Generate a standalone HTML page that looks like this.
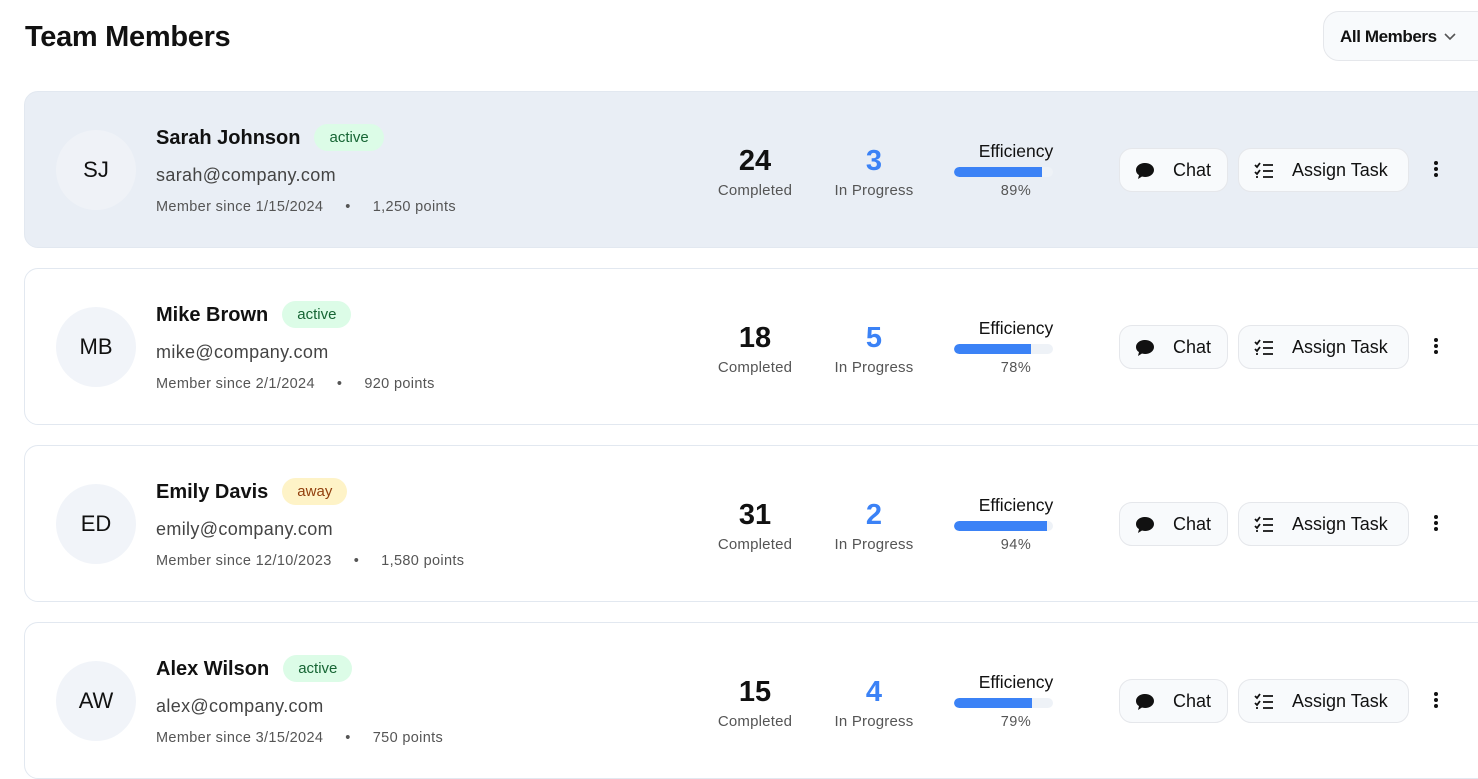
<!DOCTYPE html>
<html><head><style>
*{box-sizing:border-box;margin:0;padding:0}
body{width:1478px;height:775px;overflow:hidden;background:#fff;font-family:"Liberation Sans",sans-serif;color:#111;position:relative}
h1{position:absolute;left:25px;top:21px;font-size:29px;font-weight:700;letter-spacing:-0.3px}
.dd{position:absolute;left:1323px;top:11px;width:170px;height:50px;border:1px solid #e5e7eb;border-radius:16px;background:#f8fafc;font-size:17px;font-weight:700;padding:15px 0 0 16px;letter-spacing:-0.4px}
.dd svg{position:absolute;left:119px;top:20px}
.card{position:absolute;left:24px;width:1470px;height:157px;border:1px solid #e2e8f0;border-radius:14px;background:#fff}
.card.h{background:#e9eef5}
.av{position:absolute;left:31px;top:38px;width:80px;height:80px;border-radius:50%;background:#f1f4f9;font-size:22px;text-align:center;line-height:80px;color:#111}
.card.h .av{background:#eff2f7}
.nm{position:absolute;left:131px;top:32px;font-size:20px;font-weight:700;white-space:nowrap}
.bd{display:inline-block;margin-left:14px;height:27px;padding:0 15px;border-radius:14px;font-size:15px;font-weight:400;line-height:27px;vertical-align:2px}
.ac{background:#dcfce7;color:#166534}
.aw{background:#fef3c7;color:#92400e}
.em{position:absolute;left:131px;top:73px;font-size:18px;letter-spacing:0.35px;color:#444}
.mt{position:absolute;left:131px;top:107px;font-size:14.5px;letter-spacing:0.35px;color:#555;white-space:nowrap}
.mt span{margin:0 22px}
.st{position:absolute;width:120px;text-align:center}
.st b{display:block;font-size:29px;line-height:32px}
.st i{display:block;font-style:normal;font-size:15px;color:#555;margin-top:5px;letter-spacing:0.2px}
.ef{position:absolute;left:929px;top:49px;width:124px;text-align:center;font-size:17.5px}
.bar{position:absolute;left:929px;top:75px;width:99px;height:10px;border-radius:5px;background:#eef2f7;overflow:hidden}
.bar div{height:100%;background:#3b82f6;border-radius:5px 0 0 5px}
.pc{position:absolute;left:929px;top:91px;width:124px;text-align:center;font-size:14.5px;color:#555;letter-spacing:0.5px}
.btn{position:absolute;top:56px;height:44px;border:1px solid #e5e7eb;border-radius:13px;background:#f8fafc;font-size:18px;line-height:42px;padding-left:53px}
.btn svg{position:absolute;left:15px;top:13px}
.dots{position:absolute;left:1408px;top:68px}
</style></head><body>
<h1>Team Members</h1>
<div class="dd">All Members<svg width="14" height="10" viewBox="0 0 14 10"><path d="M2 2l5 5 5-5" fill="none" stroke="#555" stroke-width="1.6"/></svg></div>

<div class="card h" style="top:91px">
<div class="av">SJ</div>
<div class="nm">Sarah Johnson<span class="bd ac">active</span></div>
<div class="em">sarah@company.com</div>
<div class="mt">Member since 1/15/2024<span>•</span>1,250 points</div>
<div class="st" style="left:670px;top:53px"><b>24</b><i>Completed</i></div>
<div class="st" style="left:789px;top:53px"><b style="color:#3b82f6">3</b><i>In Progress</i></div>
<div class="ef">Efficiency</div><div class="bar"><div style="width:89%"></div></div><div class="pc">89%</div>
<div class="btn" style="left:1094px;width:109px">Chat<svg width="20" height="18" viewBox="0 0 20 18"><path d="M10 1C5 1 1 4 1 8c0 2 1 4 3 5l-1 4 4-2.5c1 .3 2 .5 3 .5 5 0 9-3 9-7s-4-7-9-7z" fill="#111"/></svg></div>
<div class="btn" style="left:1213px;width:171px">Assign Task<svg width="20" height="18" viewBox="0 0 20 18"><path d="M1 3l2 2 3-4M1 10l2 2 3-4M9 3h10M9 9h10M9 15h10M2 15h2" fill="none" stroke="#111" stroke-width="1.8"/></svg></div>
<svg class="dots" width="6" height="18"><circle cx="3" cy="3" r="2" fill="#111"/><circle cx="3" cy="9" r="2" fill="#111"/><circle cx="3" cy="15" r="2" fill="#111"/></svg>
</div>

<div class="card" style="top:268px">
<div class="av">MB</div>
<div class="nm">Mike Brown<span class="bd ac">active</span></div>
<div class="em">mike@company.com</div>
<div class="mt">Member since 2/1/2024<span>•</span>920 points</div>
<div class="st" style="left:670px;top:53px"><b>18</b><i>Completed</i></div>
<div class="st" style="left:789px;top:53px"><b style="color:#3b82f6">5</b><i>In Progress</i></div>
<div class="ef">Efficiency</div><div class="bar"><div style="width:78%"></div></div><div class="pc">78%</div>
<div class="btn" style="left:1094px;width:109px">Chat<svg width="20" height="18" viewBox="0 0 20 18"><path d="M10 1C5 1 1 4 1 8c0 2 1 4 3 5l-1 4 4-2.5c1 .3 2 .5 3 .5 5 0 9-3 9-7s-4-7-9-7z" fill="#111"/></svg></div>
<div class="btn" style="left:1213px;width:171px">Assign Task<svg width="20" height="18" viewBox="0 0 20 18"><path d="M1 3l2 2 3-4M1 10l2 2 3-4M9 3h10M9 9h10M9 15h10M2 15h2" fill="none" stroke="#111" stroke-width="1.8"/></svg></div>
<svg class="dots" width="6" height="18"><circle cx="3" cy="3" r="2" fill="#111"/><circle cx="3" cy="9" r="2" fill="#111"/><circle cx="3" cy="15" r="2" fill="#111"/></svg>
</div>

<div class="card" style="top:445px">
<div class="av">ED</div>
<div class="nm">Emily Davis<span class="bd aw">away</span></div>
<div class="em">emily@company.com</div>
<div class="mt">Member since 12/10/2023<span>•</span>1,580 points</div>
<div class="st" style="left:670px;top:53px"><b>31</b><i>Completed</i></div>
<div class="st" style="left:789px;top:53px"><b style="color:#3b82f6">2</b><i>In Progress</i></div>
<div class="ef">Efficiency</div><div class="bar"><div style="width:94%"></div></div><div class="pc">94%</div>
<div class="btn" style="left:1094px;width:109px">Chat<svg width="20" height="18" viewBox="0 0 20 18"><path d="M10 1C5 1 1 4 1 8c0 2 1 4 3 5l-1 4 4-2.5c1 .3 2 .5 3 .5 5 0 9-3 9-7s-4-7-9-7z" fill="#111"/></svg></div>
<div class="btn" style="left:1213px;width:171px">Assign Task<svg width="20" height="18" viewBox="0 0 20 18"><path d="M1 3l2 2 3-4M1 10l2 2 3-4M9 3h10M9 9h10M9 15h10M2 15h2" fill="none" stroke="#111" stroke-width="1.8"/></svg></div>
<svg class="dots" width="6" height="18"><circle cx="3" cy="3" r="2" fill="#111"/><circle cx="3" cy="9" r="2" fill="#111"/><circle cx="3" cy="15" r="2" fill="#111"/></svg>
</div>

<div class="card" style="top:622px">
<div class="av">AW</div>
<div class="nm">Alex Wilson<span class="bd ac">active</span></div>
<div class="em">alex@company.com</div>
<div class="mt">Member since 3/15/2024<span>•</span>750 points</div>
<div class="st" style="left:670px;top:53px"><b>15</b><i>Completed</i></div>
<div class="st" style="left:789px;top:53px"><b style="color:#3b82f6">4</b><i>In Progress</i></div>
<div class="ef">Efficiency</div><div class="bar"><div style="width:79%"></div></div><div class="pc">79%</div>
<div class="btn" style="left:1094px;width:109px">Chat<svg width="20" height="18" viewBox="0 0 20 18"><path d="M10 1C5 1 1 4 1 8c0 2 1 4 3 5l-1 4 4-2.5c1 .3 2 .5 3 .5 5 0 9-3 9-7s-4-7-9-7z" fill="#111"/></svg></div>
<div class="btn" style="left:1213px;width:171px">Assign Task<svg width="20" height="18" viewBox="0 0 20 18"><path d="M1 3l2 2 3-4M1 10l2 2 3-4M9 3h10M9 9h10M9 15h10M2 15h2" fill="none" stroke="#111" stroke-width="1.8"/></svg></div>
<svg class="dots" width="6" height="18"><circle cx="3" cy="3" r="2" fill="#111"/><circle cx="3" cy="9" r="2" fill="#111"/><circle cx="3" cy="15" r="2" fill="#111"/></svg>
</div>
</body></html>
